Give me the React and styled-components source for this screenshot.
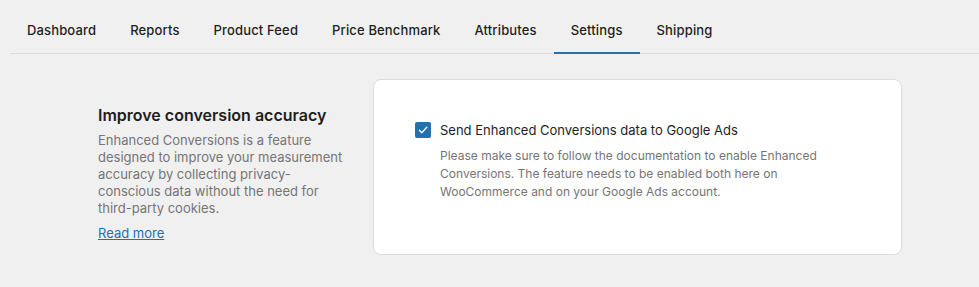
import React from "react";
import styled, { createGlobalStyle } from "styled-components";

const GlobalStyle = createGlobalStyle`
  html, body {
    margin: 0;
    padding: 0;
    background: #f0f0f0;
    font-family: Inter, "Noto Sans", Roboto, sans-serif;
    color: #1e1e1e;
    -webkit-font-smoothing: antialiased;
  }
`;

const Page = styled.div`
  width: 979px;
  height: 287px;
  overflow: hidden;
`;

const TabBar = styled.nav`
  display: flex;
  margin-left: 10px;
  height: 54px;
  border-bottom: 1px solid #dcdcde;
  box-sizing: border-box;
`;

const Tab = styled.a`
  display: flex;
  align-items: center;
  padding: 8px 17px 0;
  margin-bottom: -1px;
  font-size: 13px;
  font-weight: 500;
  letter-spacing: 0.15px;
  color: #1e1e1e;
  text-decoration: none;
  border-bottom: 2px solid ${({ $active }) => ($active ? "#2271b1" : "transparent")};
`;

const Main = styled.main`
  padding: 25px 0 0 98px;
`;

const Section = styled.section`
  display: flex;
  gap: 24px;
  align-items: flex-start;
`;

const Intro = styled.div`
  width: 251px;
  padding-top: 26px;

  h2 {
    margin: 0 0 7px;
    font-size: 16px;
    line-height: 20px;
    font-weight: 600;
    color: #1e1e1e;
  }

  p {
    margin: 0 0 5px;
    font-size: 13px;
    line-height: 17px;
    color: #757575;
  }

  a {
    font-size: 13px;
    line-height: 17px;
    color: #2271b1;
    text-decoration: underline;
  }
`;

const Card = styled.div`
  width: 529px;
  height: 176px;
  box-sizing: border-box;
  background: #fff;
  border: 1px solid #dcdcde;
  border-radius: 8px;
  padding: 41px 24px 0 41px;
`;

const CheckRow = styled.label`
  display: flex;
  align-items: center;
  gap: 9px;
  font-size: 13px;
  line-height: 18px;
  color: #1e1e1e;
`;

const Box = styled.span`
  width: 16px;
  height: 16px;
  border-radius: 2px;
  background: #2271b1;
  display: flex;
  align-items: center;
  justify-content: center;
  flex-shrink: 0;
`;

const Help = styled.p`
  margin: 8px 0 0 25px;
  font-size: 12px;
  line-height: 18px;
  color: #757575;
  max-width: 395px;
`;

const tabs = ["Dashboard", "Reports", "Product Feed", "Price Benchmark", "Attributes", "Settings", "Shipping"];

export default function App() {
  return (
    <Page>
      <GlobalStyle />
      <TabBar>
        {tabs.map((t) => (
          <Tab key={t} href="#" $active={t === "Settings"}>{t}</Tab>
        ))}
      </TabBar>
      <Main>
        <Section>
          <Intro>
            <h2>Improve conversion accuracy</h2>
            <p>
              Enhanced Conversions is a feature designed to improve your measurement accuracy by
              collecting privacy-conscious data without the need for third-party cookies.
            </p>
            <a href="#">Read more</a>
          </Intro>
          <Card>
            <CheckRow>
              <Box>
                <svg width="12" height="12" viewBox="0 0 12 12" fill="none">
                  <path d="M2.4 6.3l2.4 2.5L9.8 3.3" stroke="#fff" strokeWidth="1.3" strokeLinecap="round" strokeLinejoin="round" />
                </svg>
              </Box>
              Send Enhanced Conversions data to Google Ads
            </CheckRow>
            <Help>
              Please make sure to follow the documentation to enable Enhanced Conversions. The
              feature needs to be enabled both here on WooCommerce and on your Google Ads account.
            </Help>
          </Card>
        </Section>
      </Main>
    </Page>
  );
}
